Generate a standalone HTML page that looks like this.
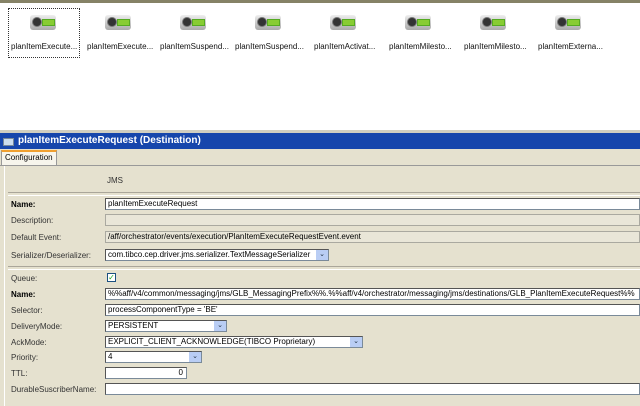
<!DOCTYPE html>
<html><head><style>
body{margin:0;width:640px;height:406px;overflow:hidden;background:#fff;font-family:"Liberation Sans",sans-serif;font-size:8px;color:#000;position:relative}
.a{position:absolute}
.ic{position:absolute;top:15px;width:26px;height:15px;border-radius:3px;background:linear-gradient(#eee,#aaa);}
.ic:before{content:"";position:absolute;left:2px;top:2px;width:10px;height:10px;border-radius:50%;background:#333;border:1px solid #777;box-sizing:border-box}
.ic:after{content:"";position:absolute;left:12px;top:4px;width:13px;height:7px;background:#8c3;border:1px solid #5a2;box-sizing:border-box}
.lb{position:absolute;top:42px;font-size:8px;color:#111;white-space:nowrap}
.l{position:absolute;left:11px;font-size:8px;color:#333}
.f{position:absolute;left:105px;height:12px;background:#fff;border:1px solid #7a8a99;border-top-color:#555;border-left-color:#555;box-sizing:border-box;font-size:8px;line-height:10px;padding-left:2px;white-space:nowrap;overflow:hidden}
.g{background:#e9e6d8;border-color:#aaa9a0}
.dd{position:absolute;width:12px;height:10px;top:0;right:0;background:#b9cdf4;color:#234;font-size:7px;text-align:center;line-height:10px}
</style></head><body>
<div class="a" style="left:0;top:0;width:640px;height:3px;background:#858266"></div>
<div class="a" style="left:8px;top:8px;width:70px;height:48px;border:1px dotted #333"></div>
<div class="ic" style="left:30px"></div><div class="lb" style="left:11px">planItemExecute...</div>
<div class="ic" style="left:105px"></div><div class="lb" style="left:87px">planItemExecute...</div>
<div class="ic" style="left:180px"></div><div class="lb" style="left:160px">planItemSuspend...</div>
<div class="ic" style="left:255px"></div><div class="lb" style="left:235px">planItemSuspend...</div>
<div class="ic" style="left:330px"></div><div class="lb" style="left:314px">planItemActivat...</div>
<div class="ic" style="left:405px"></div><div class="lb" style="left:389px">planItemMilesto...</div>
<div class="ic" style="left:480px"></div><div class="lb" style="left:464px">planItemMilesto...</div>
<div class="ic" style="left:555px"></div><div class="lb" style="left:538px">planItemExterna...</div>
<div class="a" style="left:0;top:130px;width:640px;height:3px;background:#d0cec0"></div>
<div class="a" style="left:0;top:133px;width:640px;height:16px;background:#1646ac;color:#fff;font-size:10px;font-weight:bold;line-height:16px;padding-left:18px;box-sizing:border-box">planItemExecuteRequest (Destination)</div>
<div class="a" style="left:3px;top:138px;width:9px;height:6px;background:#cde;border:1px solid #789"></div>
<div class="a" style="left:0;top:149px;width:640px;height:257px;background:#e5e1cf"></div>
<div class="a" style="left:1px;top:150px;width:56px;height:15px;background:#f7f5ec;border:1px solid #999;border-top:2px solid #f0a030;border-bottom:none;box-sizing:border-box;font-size:8px;line-height:12px;padding-left:3px">Configuration</div>
<div class="a" style="left:0;top:165px;width:640px;height:1px;background:#999"></div>
<div class="a" style="left:4px;top:166px;width:1px;height:240px;background:#fff"></div>
<div class="a" style="left:107px;top:176px;font-size:8px;color:#333">JMS</div>
<div class="a" style="left:8px;top:192px;width:632px;height:2px;border-top:1px solid #aaa69a;border-bottom:1px solid #fff"></div>
<div class="l" style="top:200px;font-weight:bold;color:#000">Name:</div>
<div class="f" style="top:198px;width:535px">planItemExecuteRequest</div>
<div class="l" style="top:216px">Description:</div>
<div class="f g" style="top:214px;width:535px"></div>
<div class="l" style="top:233px">Default Event:</div>
<div class="f g" style="top:231px;width:535px">/aff/orchestrator/events/execution/PlanItemExecuteRequestEvent.event</div>
<div class="l" style="top:251px">Serializer/Deserializer:</div>
<div class="f" style="top:249px;width:224px">com.tibco.cep.driver.jms.serializer.TextMessageSerializer<div class="dd">&#8964;</div></div>
<div class="a" style="left:8px;top:266px;width:632px;height:2px;border-top:1px solid #aaa69a;border-bottom:1px solid #fff"></div>
<div class="l" style="top:274px">Queue:</div>
<div class="a" style="left:107px;top:273px;width:9px;height:9px;background:#fff;border:1px solid #1c5180;box-sizing:border-box;color:#2a2;font-size:8px;line-height:7px;text-align:center">✓</div>
<div class="l" style="top:290px;font-weight:bold;color:#000">Name:</div>
<div class="f" style="top:288px;width:535px">%%aff/v4/common/messaging/jms/GLB_MessagingPrefix%%.%%aff/v4/orchestrator/messaging/jms/destinations/GLB_PlanItemExecuteRequest%%</div>
<div class="l" style="top:306px">Selector:</div>
<div class="f" style="top:304px;width:535px">processComponentType = 'BE'</div>
<div class="l" style="top:322px">DeliveryMode:</div>
<div class="f" style="top:320px;width:122px">PERSISTENT<div class="dd">&#8964;</div></div>
<div class="l" style="top:338px">AckMode:</div>
<div class="f" style="top:336px;width:258px">EXPLICIT_CLIENT_ACKNOWLEDGE(TIBCO Proprietary)<div class="dd">&#8964;</div></div>
<div class="l" style="top:353px">Priority:</div>
<div class="f" style="top:351px;width:97px">4<div class="dd">&#8964;</div></div>
<div class="l" style="top:369px">TTL:</div>
<div class="f" style="top:367px;width:82px;text-align:right;padding-right:3px">0</div>
<div class="l" style="top:385px">DurableSuscriberName:</div>
<div class="f" style="top:383px;width:535px"></div>
</body></html>
